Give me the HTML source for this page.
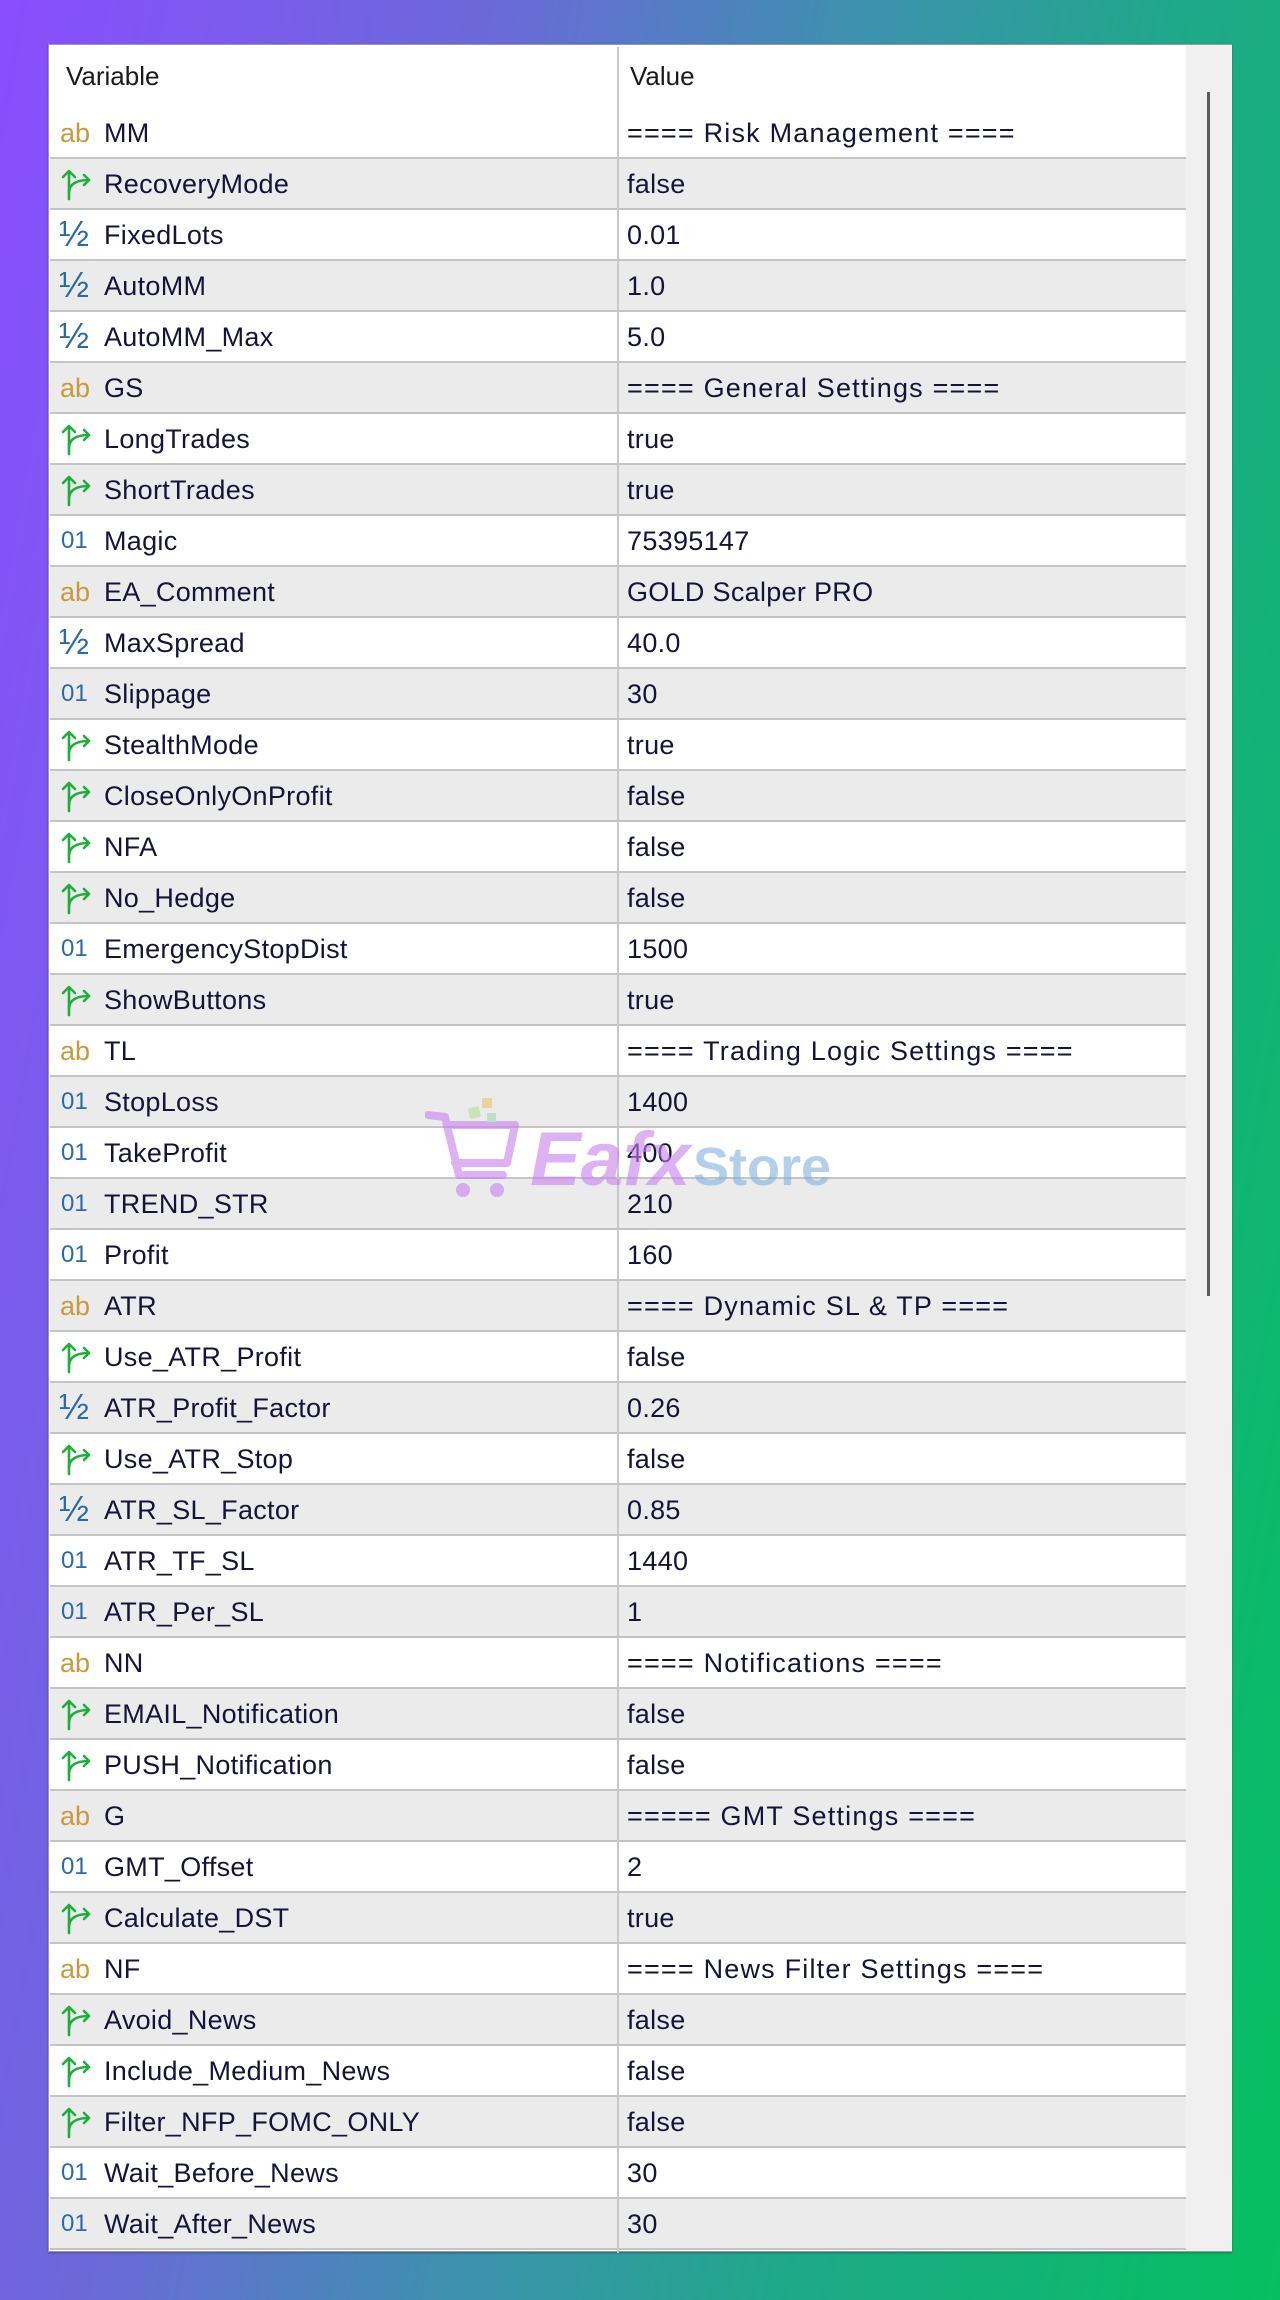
<!DOCTYPE html>
<html><head><meta charset="utf-8">
<style>
*{margin:0;padding:0;box-sizing:border-box}
html,body{width:1280px;height:2300px;overflow:hidden}
body{background:linear-gradient(100deg,#8a4dff 0%,#6a6ad8 30%,#3f8fb0 50%,#1fa88a 70%,#05c060 100%);font-family:"Liberation Sans",sans-serif;position:relative}
#panel{position:absolute;left:48px;top:44px;width:1184px;height:2208px;background:#fff;border:1px solid #9a9a9a;box-shadow:0 1px 2px rgba(0,0,0,.3)}
#scroll{position:absolute;left:1137px;top:0;width:46px;height:2206px;background:#f0f0f0}
#thumb{position:absolute;left:1158px;top:47px;width:3px;height:1204px;background:#5a5a5a}
.hdr{position:absolute;top:0;height:63px;font-size:26px;color:#1a1a1a;line-height:63px}
#colsep{position:absolute;left:568px;top:2px;width:2px;height:2206px;background:#c8c8c8}
.row{position:absolute;left:1px;width:1136px;height:51px;border-bottom:2px solid #c4c4c4;font-size:27px;color:#14143a;line-height:50px;letter-spacing:0.3px}
.row.g{background:#ebebeb}
.row .n{position:absolute;left:54px;top:0}
.row .v{position:absolute;left:577px;top:0}
.row .v.eq{letter-spacing:1.2px}
.ic{position:absolute;left:10px;top:0;width:36px;height:50px;font-size:27px;letter-spacing:0}
.ab{color:#c99a3c}
.o1{color:#2a6aa8;font-size:24px;left:11px}
.hf{color:#2a6aa8;font-size:36px;left:9px;line-height:48px}
.ic svg{position:absolute;left:0;top:8px}
#wm{position:absolute;left:425px;top:1095px;opacity:.6}
</style></head><body>
<div id="panel">
<div class="hdr" style="left:17px">Variable</div>
<div class="hdr" style="left:581px">Value</div>
<div id="rows"></div>
<div id="colsep"></div>
<div id="scroll"></div>
<div id="thumb"></div>
</div>
<svg id="wm" width="430" height="110" viewBox="0 0 430 110">
<g fill="none" stroke="#c77ff0" stroke-width="8" stroke-linecap="round" stroke-linejoin="round">
<path d="M3 20 L20 22 L34 80 L78 80"/>
<path d="M22 30 L90 30 L82 68 L30 68"/>
</g>
<g fill="#c77ff0"><circle cx="38" cy="95" r="7"/><circle cx="72" cy="95" r="7"/></g>
<rect x="57" y="3" width="10" height="10" fill="#f0c070"/>
<rect x="44" y="12" width="11" height="11" fill="#b8e090" transform="rotate(-15 50 18)"/>
<rect x="62" y="18" width="9" height="9" fill="#a0d8b0"/>
<text x="105" y="90" font-family="Liberation Sans" font-weight="bold" font-style="italic" font-size="76" fill="#c77ff0">Eafx</text>
<text x="268" y="90" font-family="Liberation Sans" font-weight="bold" font-size="54" fill="#7fb0e0">Store</text>
</svg>
<script>
var A='<svg width="34" height="34" viewBox="0 0 34 34" fill="none" stroke="#1fae3c" stroke-width="2.6" stroke-linecap="round" stroke-linejoin="round"><path d="M9 32V4M3 10L9 4L15 10"/><path d="M9 25Q10 13 29 13M24 8L29 13L24 18"/></svg>';
var rows=[
["ab","MM","==== Risk Management ===="],["b","RecoveryMode","false"],["h","FixedLots","0.01"],["h","AutoMM","1.0"],["h","AutoMM_Max","5.0"],
["ab","GS","==== General Settings ===="],["b","LongTrades","true"],["b","ShortTrades","true"],["i","Magic","75395147"],["ab","EA_Comment","GOLD Scalper PRO"],
["h","MaxSpread","40.0"],["i","Slippage","30"],["b","StealthMode","true"],["b","CloseOnlyOnProfit","false"],["b","NFA","false"],["b","No_Hedge","false"],
["i","EmergencyStopDist","1500"],["b","ShowButtons","true"],["ab","TL","==== Trading Logic Settings ===="],["i","StopLoss","1400"],["i","TakeProfit","400"],
["i","TREND_STR","210"],["i","Profit","160"],["ab","ATR","==== Dynamic SL &amp; TP ===="],["b","Use_ATR_Profit","false"],["h","ATR_Profit_Factor","0.26"],
["b","Use_ATR_Stop","false"],["h","ATR_SL_Factor","0.85"],["i","ATR_TF_SL","1440"],["i","ATR_Per_SL","1"],["ab","NN","==== Notifications ===="],
["b","EMAIL_Notification","false"],["b","PUSH_Notification","false"],["ab","G","===== GMT Settings ===="],["i","GMT_Offset","2"],["b","Calculate_DST","true"],
["ab","NF","==== News Filter Settings ===="],["b","Avoid_News","false"],["b","Include_Medium_News","false"],["b","Filter_NFP_FOMC_ONLY","false"],
["i","Wait_Before_News","30"],["i","Wait_After_News","30"]];
var h='';
rows.forEach(function(r,i){
var ic=r[0]=="ab"?'<div class="ic ab">ab</div>':r[0]=="b"?'<div class="ic">'+A+'</div>':r[0]=="h"?'<div class="ic hf">&frac12;</div>':'<div class="ic o1">01</div>';
var eq=r[2].indexOf('====')>=0?' eq':'';
h+='<div class="row'+(i%2?' g':'')+'" style="top:'+(63+i*51)+'px">'+ic+'<span class="n">'+r[1]+'</span><span class="v'+eq+'">'+r[2]+'</span></div>';
});
document.getElementById('rows').innerHTML=h;
</script>
</body></html>
